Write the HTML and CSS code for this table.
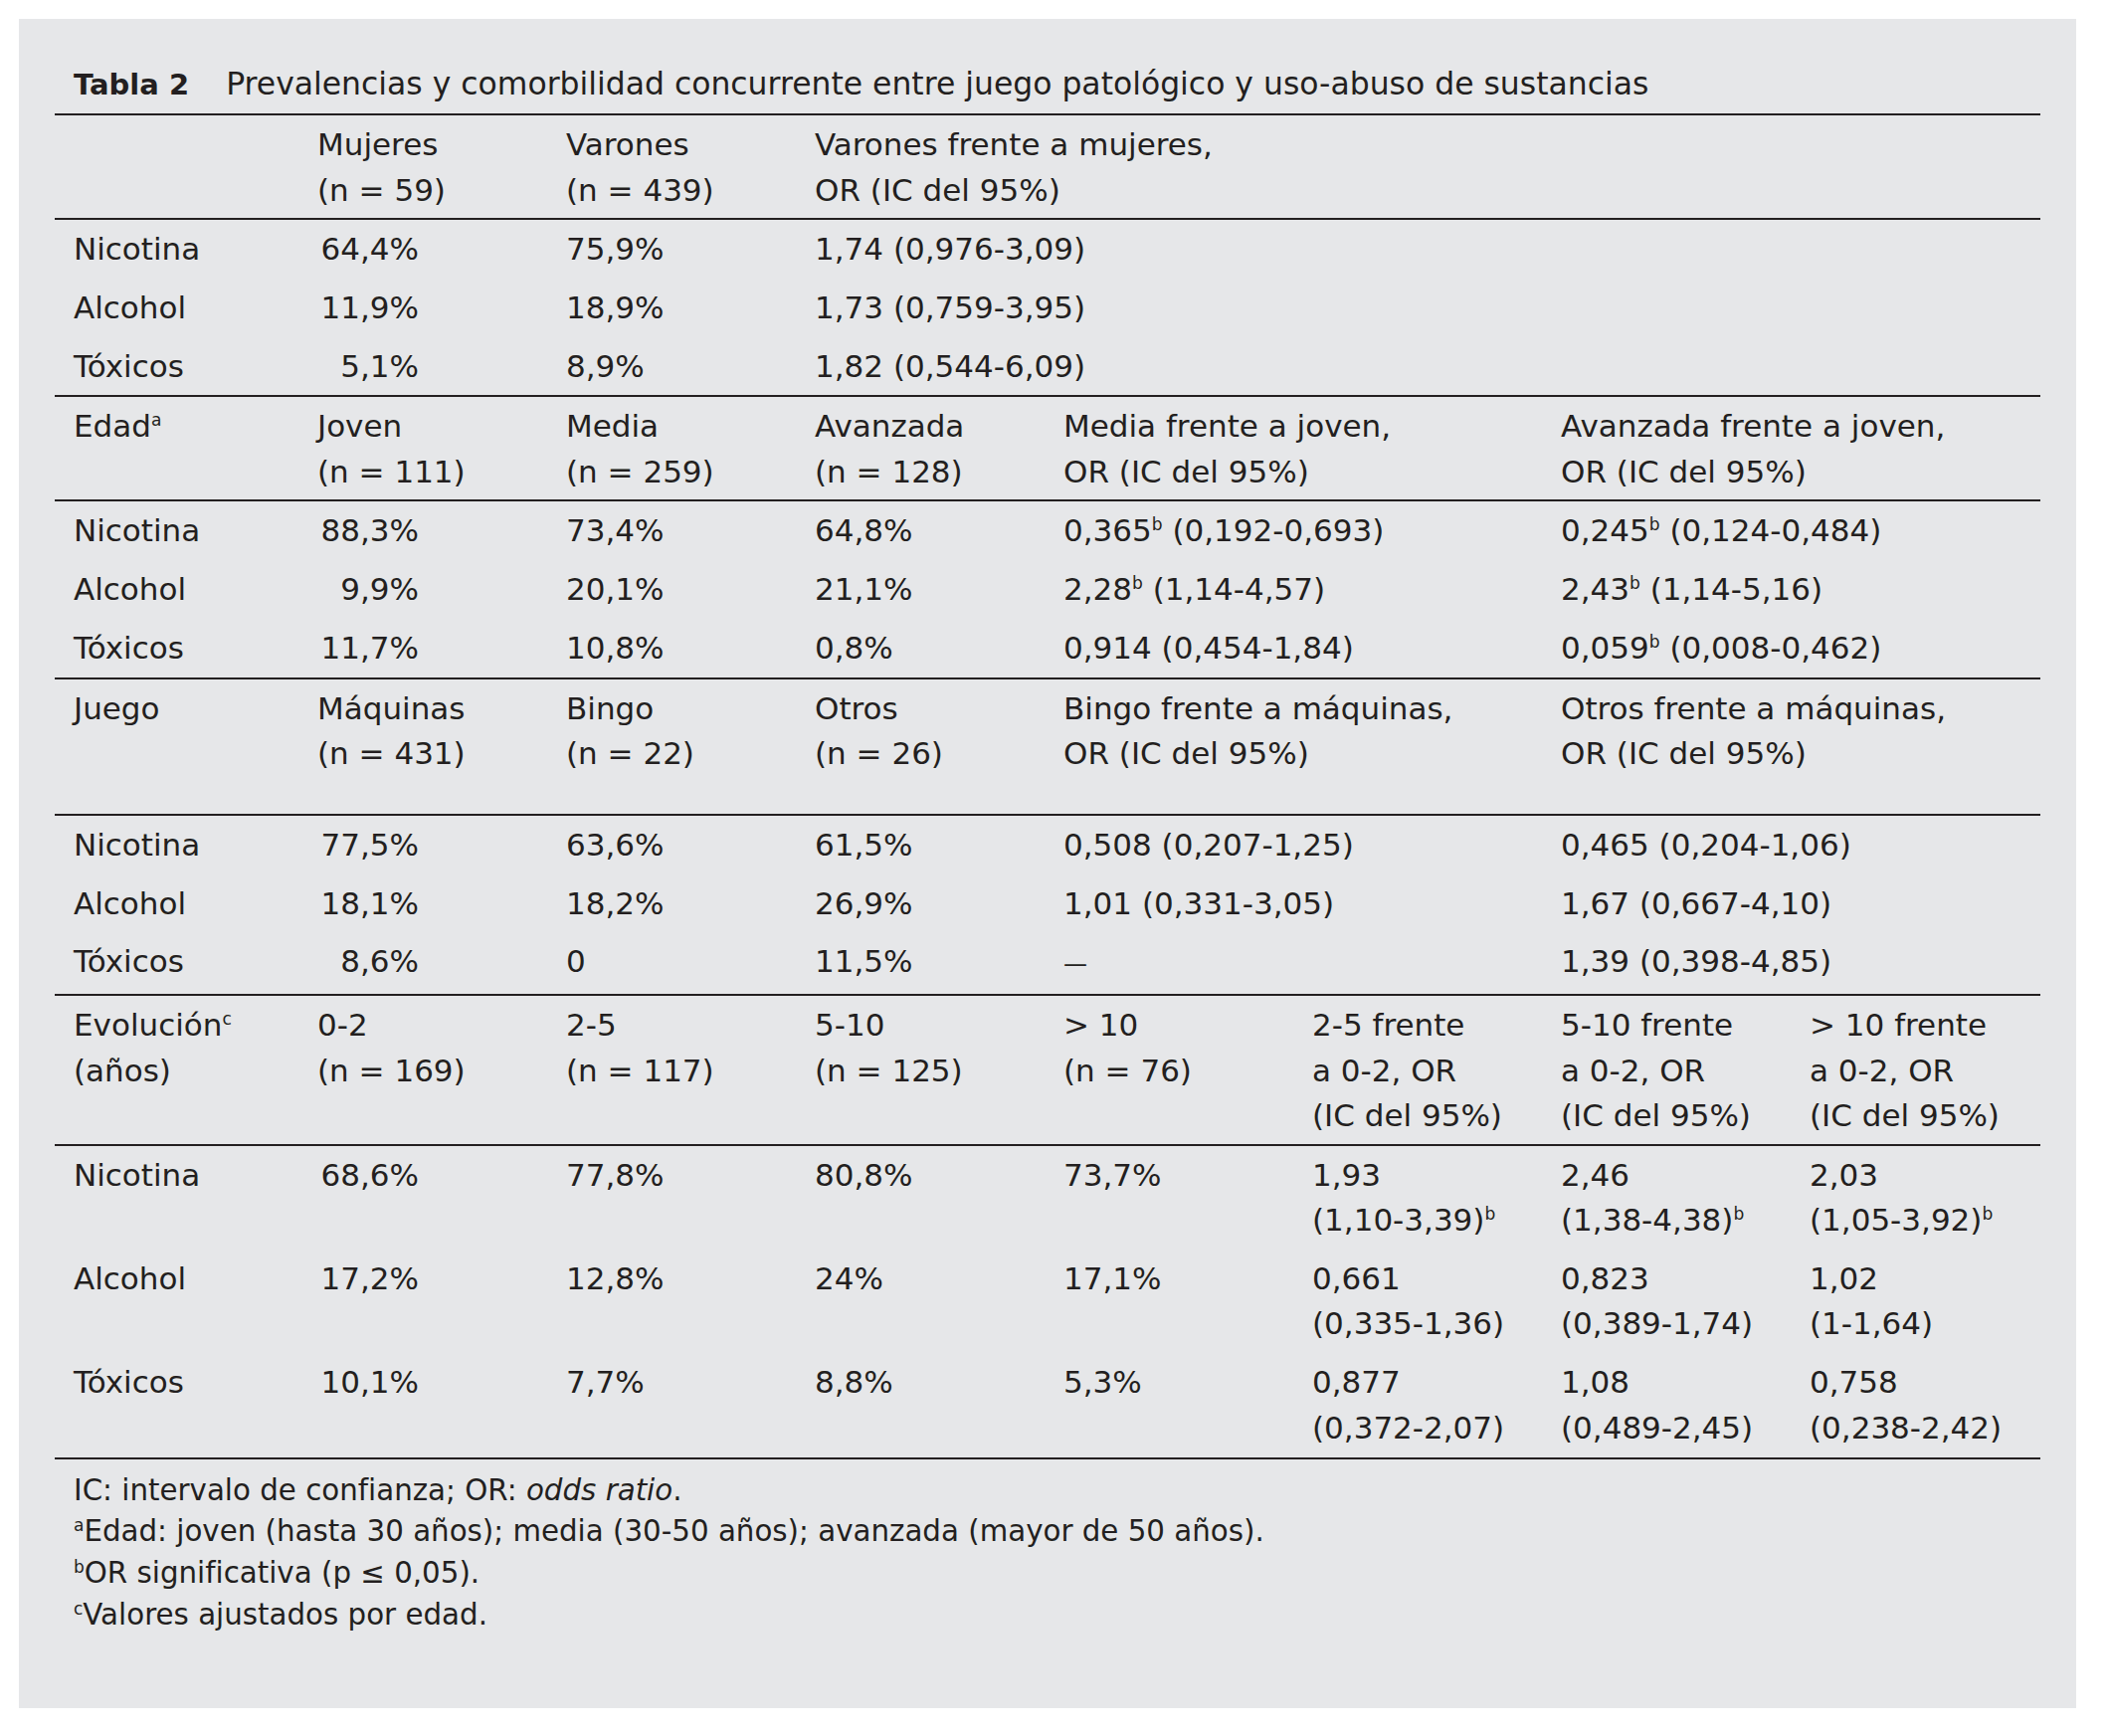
FILE: index.html
```html
<!DOCTYPE html>
<html lang="es">
<head>
<meta charset="utf-8">
<title>Tabla 2</title>
<link rel="stylesheet" href="styles.css">
</head>
<body>
<div class="panel">
  <div class="caption"><span class="cap-label">Tabla 2</span><span class="cap-text">Prevalencias y comorbilidad concurrente entre juego patológico y uso-abuso de sustancias</span></div>
  <table class="data">
    <colgroup>
      <col class="c1"><col class="cw"><col class="cw"><col class="cw"><col class="cw"><col class="cw"><col class="cw"><col class="c8">
    </colgroup>
    <tbody>
      <tr class="head">
        <td></td>
        <td>Mujeres<br>(n = 59)</td>
        <td>Varones<br>(n = 439)</td>
        <td colspan="5">Varones frente a mujeres,<br>OR (IC del 95%)</td>
      </tr>
      <tr class="row">
        <td>Nicotina</td><td><span class="r">64,4%</span></td><td>75,9%</td><td colspan="5">1,74 (0,976-3,09)</td>
      </tr>
      <tr class="row">
        <td>Alcohol</td><td><span class="r">11,9%</span></td><td>18,9%</td><td colspan="5">1,73 (0,759-3,95)</td>
      </tr>
      <tr class="row">
        <td>Tóxicos</td><td><span class="r">5,1%</span></td><td>8,9%</td><td colspan="5">1,82 (0,544-6,09)</td>
      </tr>

      <tr class="head">
        <td>Edad<sup>a</sup></td>
        <td>Joven<br>(n = 111)</td>
        <td>Media<br>(n = 259)</td>
        <td>Avanzada<br>(n = 128)</td>
        <td colspan="2">Media frente a joven,<br>OR (IC del 95%)</td>
        <td colspan="2">Avanzada frente a joven,<br>OR (IC del 95%)</td>
      </tr>
      <tr class="row">
        <td>Nicotina</td><td><span class="r">88,3%</span></td><td>73,4%</td><td>64,8%</td>
        <td colspan="2">0,365<sup>b</sup> (0,192-0,693)</td><td colspan="2">0,245<sup>b</sup> (0,124-0,484)</td>
      </tr>
      <tr class="row">
        <td>Alcohol</td><td><span class="r">9,9%</span></td><td>20,1%</td><td>21,1%</td>
        <td colspan="2">2,28<sup>b</sup> (1,14-4,57)</td><td colspan="2">2,43<sup>b</sup> (1,14-5,16)</td>
      </tr>
      <tr class="row">
        <td>Tóxicos</td><td><span class="r">11,7%</span></td><td>10,8%</td><td>0,8%</td>
        <td colspan="2">0,914 (0,454-1,84)</td><td colspan="2">0,059<sup>b</sup> (0,008-0,462)</td>
      </tr>

      <tr class="head head-tall">
        <td>Juego</td>
        <td>Máquinas<br>(n = 431)</td>
        <td>Bingo<br>(n = 22)</td>
        <td>Otros<br>(n = 26)</td>
        <td colspan="2">Bingo frente a máquinas,<br>OR (IC del 95%)</td>
        <td colspan="2">Otros frente a máquinas,<br>OR (IC del 95%)</td>
      </tr>
      <tr class="row">
        <td>Nicotina</td><td><span class="r">77,5%</span></td><td>63,6%</td><td>61,5%</td>
        <td colspan="2">0,508 (0,207-1,25)</td><td colspan="2">0,465 (0,204-1,06)</td>
      </tr>
      <tr class="row">
        <td>Alcohol</td><td><span class="r">18,1%</span></td><td>18,2%</td><td>26,9%</td>
        <td colspan="2">1,01 (0,331-3,05)</td><td colspan="2">1,67 (0,667-4,10)</td>
      </tr>
      <tr class="row">
        <td>Tóxicos</td><td><span class="r">8,6%</span></td><td>0</td><td>11,5%</td>
        <td colspan="2"><span class="dash">—</span></td><td colspan="2">1,39 (0,398-4,85)</td>
      </tr>

      <tr class="head">
        <td>Evolución<sup>c</sup><br>(años)</td>
        <td>0-2<br>(n = 169)</td>
        <td>2-5<br>(n = 117)</td>
        <td>5-10<br>(n = 125)</td>
        <td>&gt; 10<br>(n = 76)</td>
        <td>2-5 frente<br>a 0-2, OR<br>(IC del 95%)</td>
        <td>5-10 frente<br>a 0-2, OR<br>(IC del 95%)</td>
        <td>&gt; 10 frente<br>a 0-2, OR<br>(IC del 95%)</td>
      </tr>
      <tr class="row">
        <td>Nicotina</td><td><span class="r">68,6%</span></td><td>77,8%</td><td>80,8%</td><td>73,7%</td>
        <td>1,93<br>(1,10-3,39)<sup>b</sup></td><td>2,46<br>(1,38-4,38)<sup>b</sup></td><td>2,03<br>(1,05-3,92)<sup>b</sup></td>
      </tr>
      <tr class="row">
        <td>Alcohol</td><td><span class="r">17,2%</span></td><td>12,8%</td><td>24%</td><td>17,1%</td>
        <td>0,661<br>(0,335-1,36)</td><td>0,823<br>(0,389-1,74)</td><td>1,02<br>(1-1,64)</td>
      </tr>
      <tr class="row">
        <td>Tóxicos</td><td><span class="r">10,1%</span></td><td>7,7%</td><td>8,8%</td><td>5,3%</td>
        <td>0,877<br>(0,372-2,07)</td><td>1,08<br>(0,489-2,45)</td><td>0,758<br>(0,238-2,42)</td>
      </tr>
    </tbody>
  </table>
  <div class="notes">
    <p>IC: intervalo de confianza; OR: <i>odds ratio</i>.</p>
    <p><sup>a</sup>Edad: joven (hasta 30 años); media (30-50 años); avanzada (mayor de 50 años).</p>
    <p><sup>b</sup>OR significativa (p ≤ 0,05).</p>
    <p><sup>c</sup>Valores ajustados por edad.</p>
  </div>
</div>
</body>
</html>
```

FILE: styles.css
```css
html, body {
  margin: 0;
  padding: 0;
  background: #ffffff;
}

body {
  font-family: "DejaVu Sans", "Liberation Sans", sans-serif;
  color: #231f20;
}

.panel {
  box-sizing: border-box;
  margin: 19px 0 0 19px;
  width: 2068px;
  height: 1698px;
  background: #e6e7e9;
  padding: 47px 36px 0 36px;
}

.caption {
  display: flex;
  align-items: baseline;
  gap: 37px;
  padding-left: 19px;
  font-size: 31.45px;
  line-height: 36px;
  margin-bottom: 11px;
  white-space: nowrap;
}

.cap-label {
  font-weight: bold;
  font-size: 29px;
}

.data {
  table-layout: fixed;
  border-collapse: separate;
  border-spacing: 0;
  width: 1996px;
  border-bottom: 2px solid #231f20;
  font-size: 31px;
  line-height: 45.5px;
}

.c1 { width: 245px; }
.cw { width: 250px; }
.c8 { width: 251px; }

.data td {
  padding: 0 0 0 19px;
  vertical-align: top;
  white-space: nowrap;
  text-align: left;
}

.head td {
  border-top: 2px solid #231f20;
  border-bottom: 2px solid #231f20;
  padding-top: 7px;
  padding-bottom: 5px;
}

.head-tall td {
  padding-bottom: 37px;
}

.row td {
  padding-top: 7px;
  padding-bottom: 6.3px;
}

.r {
  display: inline-block;
  width: 102px;
  text-align: right;
}

.dash {
  font-size: 24px;
}

sup {
  font-size: 0.55em;
  line-height: 0;
  vertical-align: 0.62em;
}

.notes {
  padding: 11px 0 0 19px;
  font-size: 29.3px;
  line-height: 41.7px;
}

.notes p {
  margin: 0;
  white-space: nowrap;
}

.notes sup {
  font-size: 0.58em;
  vertical-align: 0.6em;
}
```
